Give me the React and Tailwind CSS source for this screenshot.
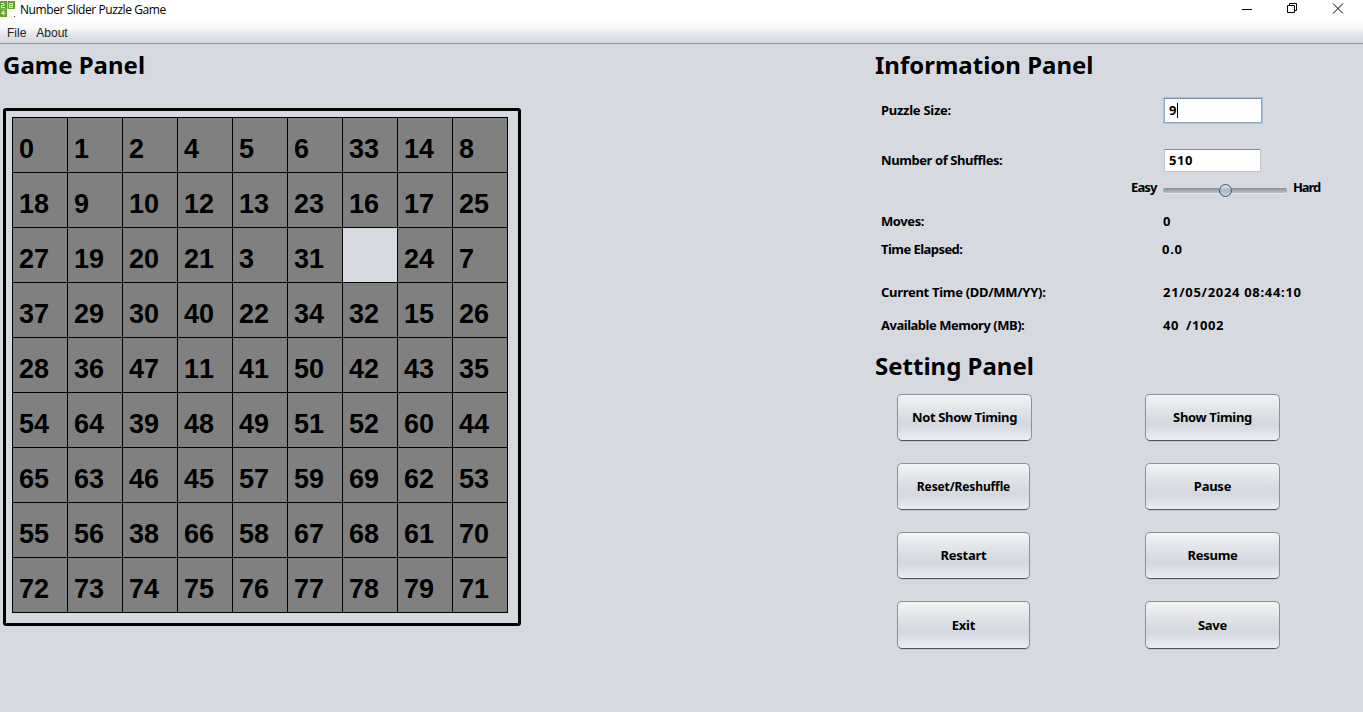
const board = [
  [0, 1, 2, 4, 5, 6, 33, 14, 8],
  [18, 9, 10, 12, 13, 23, 16, 17, 25],
  [27, 19, 20, 21, 3, 31, null, 24, 7],
  [37, 29, 30, 40, 22, 34, 32, 15, 26],
  [28, 36, 47, 11, 41, 50, 42, 43, 35],
  [54, 64, 39, 48, 49, 51, 52, 60, 44],
  [65, 63, 46, 45, 57, 59, 69, 62, 53],
  [55, 56, 38, 66, 58, 67, 68, 61, 70],
  [72, 73, 74, 75, 76, 77, 78, 79, 71],
];

function Titlebar() {
  return (
    <header className="flex h-[21px] items-start justify-between bg-white">
      <div className="flex">
        <svg width="15" height="17" viewBox="0 0 15 17">
          <path d="M0 1h7v16H0zM7.500 1H15v8H7.500z" fill="#62a331" />
          <path d="M7 1h.5v8H7zM0 8.700h7v.5H0z" fill="#b4d49a" />
          <path d="M1 3.500h3v2H1.500v2H5" fill="none" stroke="#e4f3d5" />
          <path d="M9.500 3.500h3v4h-3zM9.500 5.500h3" fill="none" stroke="#d4eabf" />
          <path d="M3.500 10.500L1.500 13.500H5M3.800 10.500v5" fill="none" stroke="#e4f3d5" />
          <path d="M14 16h1v1h-1z" fill="#444" />
        </svg>
        <span className="ml-[5px] h-5 font-['Open_Sans',sans-serif] text-[12px] leading-[20px] tracking-[-0.42px]">Number Slider Puzzle Game</span>
      </div>
      <svg width="122" height="20" viewBox="0 0 122 20" fill="none" stroke="#000">
        <path d="M1 9.500h10" />
        <path d="M46.500 5.500h7v7h-7zM48.500 5V3.500h7v7H54" />
        <path d="M92 3.500l10 10M102 3.500l-10 10" />
      </svg>
    </header>
  );
}

function Heading({ children }) {
  return <h2 className="h-11 whitespace-nowrap text-[24px] font-bold leading-[41px]">{children}</h2>;
}

function Row({ label, className, labelClass = "", children }) {
  return (
    <div className={`flex pl-[6px] ${className}`}>
      <span className={`w-[282px] shrink-0 whitespace-nowrap ${labelClass}`}>{label}</span>
      {children}
    </div>
  );
}

function Button({ children, className = "h-[47px] w-[135px] tracking-[-0.25px]" }) {
  return (
    <button className={`rounded-[5px] border border-[#8d9099] border-b-[#50545e] bg-[linear-gradient(#f3f4f6_0%,#e5e7eb_25%,#d7dae1_55%,#d5d8df_68%,#e9edf6_100%)] font-bold shadow-[0_1px_0_#c6c9d0] ${className}`}>
      {children}
    </button>
  );
}

export default function App() {
  return (
    <div className="flex h-[712px] w-[1363px] flex-col overflow-hidden bg-[#d6d9e0] font-['Noto_Sans',sans-serif] text-black">
      <Titlebar />
      <nav className="flex h-[23px] gap-[10px] border-b border-[#8f969f] bg-[linear-gradient(#fcfcfe_0%,#f8f9fb_30%,#e0e3e8_65%,#d5d9df_100%)] pl-[7px] pt-px font-['Liberation_Sans',sans-serif] text-[12px] leading-[23px] text-[#222]">
        <span>File</span>
        <span>About</span>
      </nav>
      <main className="flex flex-1">
        <section className="w-[875px] pl-[3px]">
          <Heading>Game Panel</Heading>
          <div className="mt-5 size-[518px] rounded-[3px] border-[3px] border-black p-[6px]">
            <div className="grid w-[496px] grid-cols-[repeat(9,55px)] border-l border-t border-black font-['Liberation_Sans',sans-serif] text-[27px] font-bold leading-[62px] [font-kerning:none]">
              {board.flat().map((n, i) => (
                <div key={i} className={`h-[55px] border-b border-r border-black pl-[6px] ${n === null ? "bg-[#d6d9e0]" : "bg-[#808080]"}`}>
                  {n}
                </div>
              ))}
            </div>
          </div>
        </section>
        <section className="w-[488px] text-[13px] font-bold">
          <Heading>Information Panel</Heading>
          <Row label="Puzzle Size:" className="h-[46px] pt-[9px]" labelClass="leading-[26px] tracking-[-0.27px]">
            <div className="flex h-[27px] w-[100px] items-center border-2 border-[#8fa9c7] border-t-[#7b8ea8] bg-white pl-1 leading-[23px] outline-1 -outline-offset-1 outline-[#abc1da]">
              <span className="w-2">9</span>
              <span className="h-[15px] w-px bg-black" />
            </div>
          </Row>
          <Row label="Number of Shuffles:" className="h-[43px] pt-[15px]" labelClass="leading-[23px] tracking-[-0.42px]">
            <div className="ml-px h-[23px] w-[97px] border border-[#c0c4cb] border-t-[#8d8f94] bg-white pl-1 leading-[21px] tracking-[0.6px]">510</div>
          </Row>
          <div className="flex h-[30px] pl-[256px] leading-[20px]">
            <span className="w-[31px] tracking-[-0.9px]">Easy</span>
            <svg width="128" height="20" viewBox="0 0 128 20" className="mt-[3px]">
              <defs>
                <linearGradient id="track" x2="0" y2="1">
                  <stop stopColor="#898d95" />
                  <stop offset="1" stopColor="#bbc0c8" />
                </linearGradient>
                <linearGradient id="thumb" x2="0" y2="1">
                  <stop stopColor="#dce6ef" />
                  <stop offset=".5" stopColor="#a5b7c8" />
                  <stop offset="1" stopColor="#c3d6e8" />
                </linearGradient>
              </defs>
              <rect x="1" y="8" width="124" height="5" rx="2" fill="url(#track)" />
              <path d="M3 13.500h121" stroke="#e3e6ec" />
              <circle cx="63.500" cy="10.500" r="6" fill="url(#thumb)" stroke="#4b5561" />
            </svg>
            <span className="ml-[3px] tracking-[-1.1px]">Hard</span>
          </div>
          <Row label="Moves:" className="h-7 leading-[28px]" labelClass="tracking-[-0.4px]">0</Row>
          <Row label="Time Elapsed:" className="h-[41px] leading-[28px]" labelClass="tracking-[-0.55px]">
            <span className="-ml-px tracking-[0.7px]">0.0</span>
          </Row>
          <Row label="Current Time (DD/MM/YY):" className="h-[33px] leading-[32px]" labelClass="tracking-[-0.3px]">
            <span className="tracking-[0.69px]">21/05/2024 08:44:10</span>
          </Row>
          <Row label="Available Memory (MB):" className="h-9 leading-[32px]" labelClass="tracking-[-0.48px]">
            <span className="w-[23px] tracking-[0.6px]">40</span>
            <span className="tracking-[0.6px]">/1002</span>
          </Row>
          <Heading>Setting Panel</Heading>
          <div className="mt-[5px] grid grid-cols-[248px_135px] gap-y-[22px] pl-[22px]">
            <Button className="h-[47px] w-[135px] tracking-[-0.35px]">Not Show Timing</Button>
            <Button className="h-[47px] w-[135px] tracking-[-0.35px]">Show Timing</Button>
            <Button className="h-[47px] w-[133px] text-[12px] tracking-[-0.12px]">Reset/Reshuffle</Button>
            <Button>Pause</Button>
            <Button className="h-[47px] w-[133px] tracking-[-0.25px]">Restart</Button>
            <Button>Resume</Button>
            <Button className="h-[48px] w-[133px] pt-[2px] tracking-[-0.25px]">Exit</Button>
            <Button className="h-[48px] w-[135px] pt-[2px] tracking-[-0.25px]">Save</Button>
          </div>
        </section>
      </main>
    </div>
  );
}
